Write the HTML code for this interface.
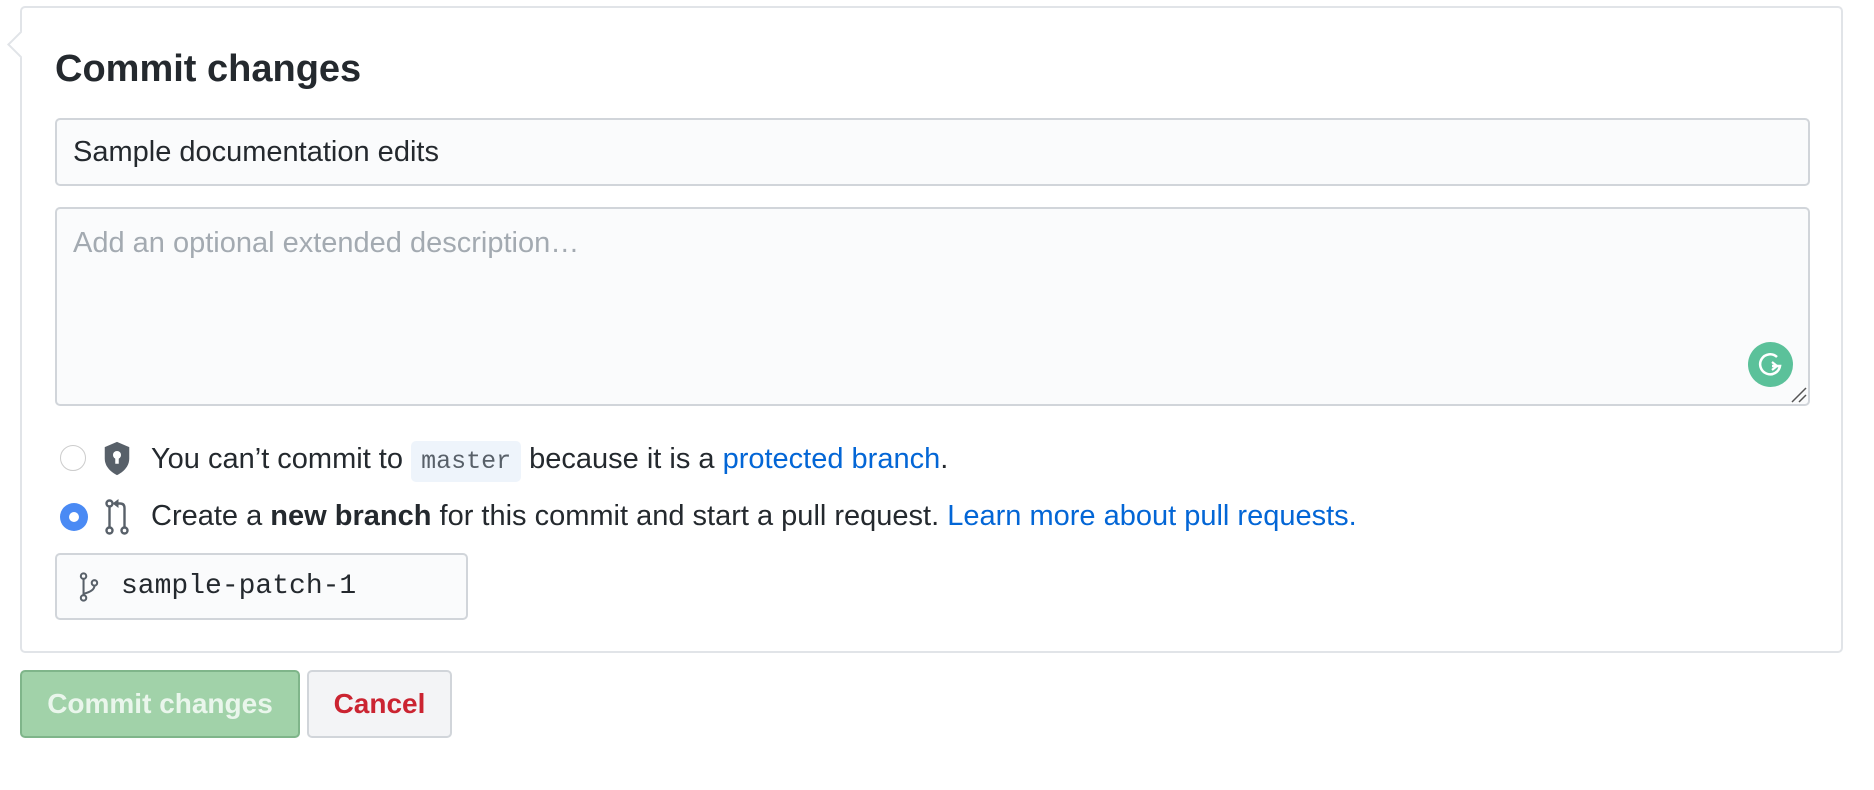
<!DOCTYPE html>
<html><head><meta charset="utf-8"><style>
body{margin:0;width:1874px;height:790px;background:#fff;font-family:"Liberation Sans",sans-serif;color:#24292e;position:relative;overflow:hidden}
.box{position:absolute;left:20px;top:6px;width:1823px;height:647px;border:2px solid #e1e4e8;border-radius:5px;box-sizing:border-box}
.caret{position:absolute;left:11px;top:35px;width:17px;height:17px;background:#fff;border-left:2px solid #e1e4e8;border-bottom:2px solid #e1e4e8;transform:rotate(45deg)}
h1{position:absolute;left:55px;top:46px;margin:0;font-size:38px;font-weight:bold;line-height:46px}
.inp{position:absolute;background:#fafbfc;border:2px solid #d1d5da;border-radius:5px;box-sizing:border-box}
.t{position:absolute;font-size:29px;white-space:nowrap;line-height:36px}
a{color:#0366d6;text-decoration:none}
code{font-family:"Liberation Mono",monospace;font-size:25px;background:#eef4fb;color:#586069;border-radius:5px;padding:6px 10px}
.btn{position:absolute;top:670px;height:68px;border-radius:5px;box-sizing:border-box;font-weight:bold;font-size:28px;text-align:center;line-height:64px}
</style></head><body>
<div class="box"></div><div class="caret"></div>
<h1>Commit changes</h1>
<div class="inp" style="left:55px;top:118px;width:1755px;height:68px"></div>
<div class="t" style="left:73px;top:134px">Sample documentation edits</div>
<div class="inp" style="left:55px;top:207px;width:1755px;height:199px"></div>
<div class="t" style="left:73px;top:225px;color:#a3aab1">Add an optional extended description…</div>
<div style="position:absolute;left:1748px;top:342px;width:45px;height:45px;border-radius:50%;background:#5bc19a"></div>
<svg style="position:absolute;left:1748px;top:342px" width="45" height="45"><path d="M29 15 A10 10 0 1 0 32 24 L24 24" fill="none" stroke="#fff" stroke-width="2.5"/><path d="M24 20 L29 24 L24 28" fill="none" stroke="#fff" stroke-width="2.2"/></svg>
<svg style="position:absolute;left:1790px;top:386px" width="18" height="18"><path d="M2 16 L16 2 M9 16 L16 9" stroke="#555" stroke-width="1.5"/></svg>
<div style="position:absolute;left:60px;top:445px;width:26px;height:26px;border-radius:50%;border:1px solid #ccc;background:#fff;box-sizing:border-box"></div>
<svg style="position:absolute;left:103px;top:441px" width="28" height="35" viewBox="0 0 16 20"><path d="M1 3.5 L8 0.5 L15 3.5 L15 10 C15 15 11 18 8 19.5 C5 18 1 15 1 10Z" fill="#586069"/><circle cx="8" cy="8" r="2.3" fill="#fff"/><rect x="7" y="8" width="2" height="5" fill="#fff"/></svg>
<div class="t" style="left:151px;top:441px">You can’t commit to <code>master</code> because it is a <a>protected branch</a>.</div>
<div style="position:absolute;left:60px;top:503px;width:28px;height:28px;border-radius:50%;background:#4a8af4"></div>
<div style="position:absolute;left:69px;top:512px;width:10px;height:10px;border-radius:50%;background:#fff"></div>
<svg style="position:absolute;left:104px;top:499px" width="26" height="36" viewBox="0 0 16 24"><g fill="none" stroke="#586069" stroke-width="1.6"><circle cx="3" cy="3" r="2"/><circle cx="3" cy="21" r="2"/><circle cx="13" cy="21" r="2"/><path d="M3 5 V19 M13 19 V6 Q13 3 10 3 H8"/></g><path d="M9 0 L5 3 L9 6Z" fill="#586069"/></svg>
<div class="t" style="left:151px;top:498px">Create a <b>new branch</b> for this commit and start a pull request. <a>Learn more about pull requests.</a></div>
<div class="inp" style="left:55px;top:553px;width:413px;height:67px"></div>
<svg style="position:absolute;left:79px;top:572px" width="20" height="30" viewBox="0 0 14 22"><g fill="none" stroke="#586069" stroke-width="1.5"><circle cx="3" cy="3" r="2"/><circle cx="3" cy="19" r="2"/><circle cx="11" cy="8" r="2"/><path d="M3 5 V17 M11 10 Q11 14 3 16"/></g></svg>
<div class="t" style="left:121px;top:569px;font-family:'Liberation Mono',monospace;font-size:28px">sample-patch-1</div>
<div class="btn" style="left:20px;width:280px;background:#a1d2a9;border:2px solid #7fb58a;color:#eaf6ec">Commit changes</div>
<div class="btn" style="left:307px;width:145px;background:#f3f4f6;border:2px solid #d1d5da;color:#cb2431">Cancel</div>
</body></html>
